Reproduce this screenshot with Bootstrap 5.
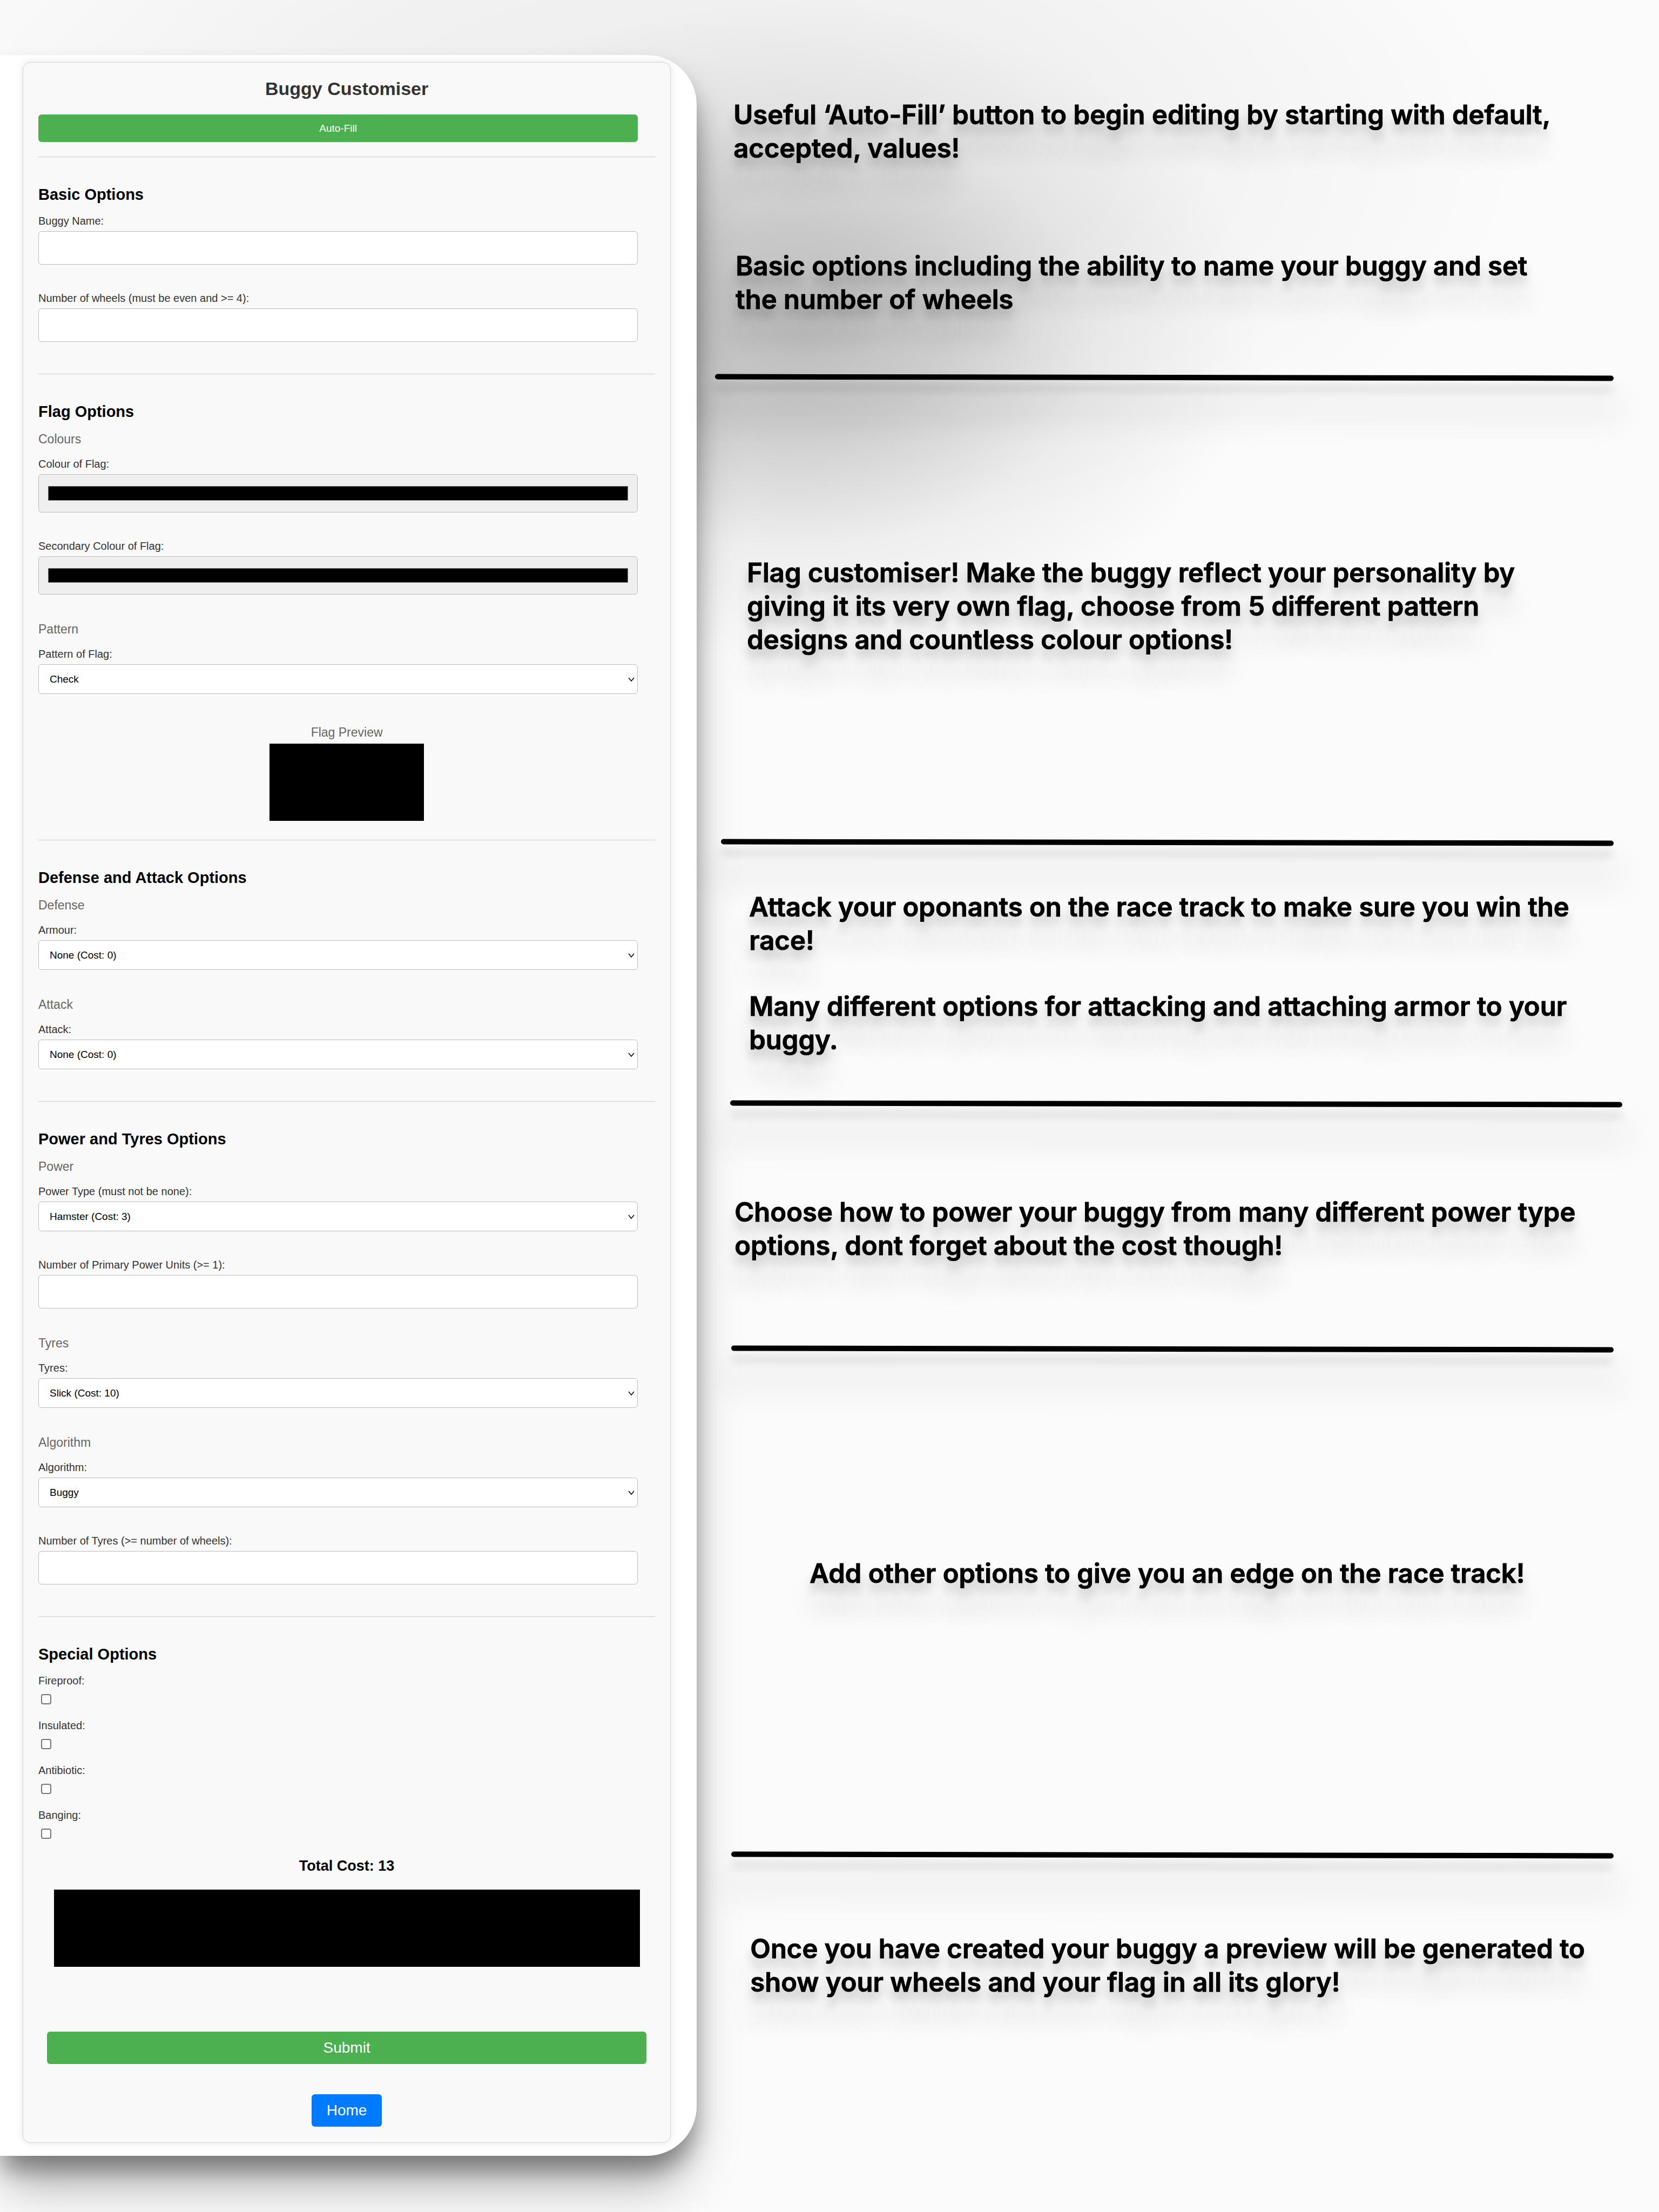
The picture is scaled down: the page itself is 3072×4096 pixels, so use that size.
<!DOCTYPE html>
<html lang="en">
<head>
<meta charset="utf-8">
<meta name="viewport" content="width=device-width, initial-scale=1">
<title>Buggy Customiser</title>
<link rel="stylesheet" href="https://cdn.jsdelivr.net/npm/bootstrap@5.3.0/dist/css/bootstrap.min.css">
<style>
body{font-family:"Liberation Sans",Arial,sans-serif;color:#333;font-size:20px;line-height:24px;background:#fcfcfc;overflow-x:hidden}
.stage{min-height:100vh;padding-top:102px;overflow:hidden;position:relative;
 background:
  radial-gradient(ellipse 28% 15% at 48% 15%,rgba(0,0,0,.22),rgba(0,0,0,.16) 30%,rgba(0,0,0,.05) 65%,transparent),
  radial-gradient(ellipse 50% 18% at 42% 7%,rgba(0,0,0,.06),rgba(0,0,0,.04) 50%,transparent),#fbfbfb}
.device{width:42%;background:#fff;border-radius:0 92px 92px 0;padding:13px 48px 24px 42px;box-shadow:0 70px 90px -10px rgba(0,0,0,.25),0 30px 44px -4px rgba(0,0,0,.38)}
.buggy-card{background:#f9f9f9;border:1px solid #d4d4d4;border-radius:14px;padding:31px 28px 29px;box-shadow:0 0 14px rgba(0,0,0,.1)}
.page-title{font-size:34px;line-height:34px;font-weight:700;text-align:center;margin:0 0 31px}
.group-title{font-size:29px;line-height:34px;font-weight:700;color:#000;margin:0 0 20px}
.sub-title{font-size:23px;line-height:28px;font-weight:400;color:#666;margin:0 0 20px}
.field-label{display:block;line-height:24px;margin-bottom:7px}
.rule{border:0;border-top:1px solid #ccc;opacity:1;margin:59px 0 52px}
.rule-first{margin-top:27px}
.rule-near{margin-top:35px}
.narrow{width:calc(100% - 32px)}
.field{margin-bottom:50px}
.form-control,.form-select{border:1px solid #bbb;border-radius:6px;color:#000;font-size:19px;background-color:#fff}
.text-field{height:62px}
.form-select{height:55px;padding:0 40px 0 20px;line-height:24px;background-size:14px 14px;background-position:right 4px center;
 background-image:url("data:image/svg+xml,%3csvg xmlns='http://www.w3.org/2000/svg' viewBox='0 0 14 14'%3e%3cpath d='M2 4l5 6 5-6' fill='none' stroke='%23000' stroke-width='1.5'/%3e%3c/svg%3e")}
.colour-field{height:71px;padding:21px 17px;background:#efefef;display:block}
.colour-field::-webkit-color-swatch-wrapper{padding:0}
.colour-field::-webkit-color-swatch{border:1px solid #777!important;border-radius:0!important}
.btn-go{background:#4caf50;color:#fff;border:0;border-radius:6px}
.btn-go:hover{background:#45a049;color:#fff}
.btn-fill{font-size:19px;line-height:24px;height:51px}
.btn-big{font-size:28px;line-height:34px;height:60px;padding:0}
.btn-home{background:#007bff;color:#fff;border:0;border-radius:6px;width:130px;padding:13px 0}
.preview{padding-top:7px}
.preview .sub-title{margin-bottom:7px}
.flag-box{width:286px;height:143px;background:#000}
.buggy-box{width:95%;height:143px;background:#000;margin-bottom:120px}
.tick.tick[type=checkbox]{display:block;width:19px;height:19px;margin:0 0 27px 5px;border:2px solid #767676;border-radius:4px;background-color:#fff;float:none}
.tick-label{margin-bottom:13px}
.total{font-size:27px;line-height:34px;font-weight:700;color:#000;margin:33px 0 27px}
.notes{flex:1;font-family:Inter,sans-serif;color:#000;padding-left:34px}
.note{font-weight:600;font-size:49px;line-height:62px;margin:0;-webkit-text-stroke:1px #000;text-shadow:0 16px 18px rgba(0,0,0,.22),0 52px 50px rgba(0,0,0,.2)}
.stroke{border:0;height:10px;border-radius:5px;background:#000;opacity:1;margin:0 84px 0 0;transform:rotate(.1deg);box-shadow:0 20px 16px rgba(0,0,0,.12),0 56px 60px 20px rgba(0,0,0,.05)}
.stroke-in{margin-left:11px}
.stroke-wide{margin:0 68px 0 28px}
.stroke-end{margin:0 84px 0 30px}
.block{display:flex;flex-direction:column}
.b1{height:592px;padding:80px 60px 0 34px;gap:156px}
.b2{height:851px;padding:326px 200px 0 59px}
.b3{height:474px;padding:84px 60px 0 63px;gap:60px}
.b4{height:444px;padding:165px 60px 0 36px}
.b5{height:927px;padding:380px 60px 0 175px}
.b6{padding:138px 60px 0 65px}
</style>
<script src="https://cdn.jsdelivr.net/npm/bootstrap@5.3.0/dist/js/bootstrap.bundle.min.js"></script>
</head>
<body>
<div class="stage d-flex align-items-start">
<main class="device">
<form class="buggy-card">
  <h1 class="page-title">Buggy Customiser</h1>
  <button type="button" class="btn btn-go btn-fill narrow d-block">Auto-Fill</button>
  <hr class="rule rule-first">

  <h2 class="group-title">Basic Options</h2>
  <div class="field narrow"><label class="field-label" for="name">Buggy Name:</label><input class="form-control text-field" id="name" type="text"></div>
  <div class="field narrow"><label class="field-label" for="wheels">Number of wheels (must be even and &gt;= 4):</label><input class="form-control text-field" id="wheels" type="text"></div>
  <hr class="rule">

  <h2 class="group-title">Flag Options</h2>
  <h3 class="sub-title">Colours</h3>
  <div class="field narrow"><label class="field-label" for="flag1">Colour of Flag:</label><input class="form-control colour-field" id="flag1" type="color" value="#000000"></div>
  <div class="field narrow"><label class="field-label" for="flag2">Secondary Colour of Flag:</label><input class="form-control colour-field" id="flag2" type="color" value="#000000"></div>
  <h3 class="sub-title">Pattern</h3>
  <div class="field narrow"><label class="field-label" for="pattern">Pattern of Flag:</label><select class="form-select" id="pattern"><option>Check</option></select></div>
  <div class="preview d-flex flex-column align-items-center">
    <h3 class="sub-title">Flag Preview</h3>
    <div class="flag-box"></div>
  </div>
  <hr class="rule rule-near">

  <h2 class="group-title">Defense and Attack Options</h2>
  <h3 class="sub-title">Defense</h3>
  <div class="field narrow"><label class="field-label" for="armour">Armour:</label><select class="form-select" id="armour"><option>None (Cost: 0)</option></select></div>
  <h3 class="sub-title">Attack</h3>
  <div class="field narrow"><label class="field-label" for="attack">Attack:</label><select class="form-select" id="attack"><option>None (Cost: 0)</option></select></div>
  <hr class="rule">

  <h2 class="group-title">Power and Tyres Options</h2>
  <h3 class="sub-title">Power</h3>
  <div class="field narrow"><label class="field-label" for="power">Power Type (must not be none):</label><select class="form-select" id="power"><option>Hamster (Cost: 3)</option></select></div>
  <div class="field narrow"><label class="field-label" for="units">Number of Primary Power Units (&gt;= 1):</label><input class="form-control text-field" id="units" type="text"></div>
  <h3 class="sub-title">Tyres</h3>
  <div class="field narrow"><label class="field-label" for="tyres">Tyres:</label><select class="form-select" id="tyres"><option>Slick (Cost: 10)</option></select></div>
  <h3 class="sub-title">Algorithm</h3>
  <div class="field narrow"><label class="field-label" for="algo">Algorithm:</label><select class="form-select" id="algo"><option>Buggy</option></select></div>
  <div class="field narrow"><label class="field-label" for="tyrecount">Number of Tyres (&gt;= number of wheels):</label><input class="form-control text-field" id="tyrecount" type="text"></div>
  <hr class="rule">

  <h2 class="group-title">Special Options</h2>
  <label class="field-label tick-label" for="fire">Fireproof:</label><input class="form-check-input tick" id="fire" type="checkbox">
  <label class="field-label tick-label" for="ins">Insulated:</label><input class="form-check-input tick" id="ins" type="checkbox">
  <label class="field-label tick-label" for="anti">Antibiotic:</label><input class="form-check-input tick" id="anti" type="checkbox">
  <label class="field-label tick-label" for="bang">Banging:</label><input class="form-check-input tick" id="bang" type="checkbox">
  <p class="total text-center">Total Cost: 13</p>
  <div class="buggy-box mx-auto"></div>
  <button type="submit" class="btn btn-go btn-big narrow d-block mx-auto">Submit</button>
  <div class="text-center pt-5 mt-2"><a class="btn btn-home btn-big" href="#">Home</a></div>
</form>
</main>

<aside class="notes">
  <div class="block b1">
    <p class="note">Useful ‘Auto-Fill’ button to begin editing by starting with default,<br>accepted, values!</p>
    <p class="note ps-1">Basic options including the ability to name your buggy and set<br>the number of wheels</p>
  </div>
  <hr class="stroke">
  <div class="block b2"><p class="note">Flag customiser! Make the buggy reflect your personality by<br>giving it its very own flag, choose from 5 different pattern<br>designs and countless colour options!</p></div>
  <hr class="stroke stroke-in">
  <div class="block b3">
    <p class="note">Attack your oponants on the race track to make sure you win the<br>race!</p>
    <p class="note">Many different options for attacking and attaching armor to your<br>buggy.</p>
  </div>
  <hr class="stroke stroke-wide">
  <div class="block b4"><p class="note">Choose how to power your buggy from many different power type<br>options, dont forget about the cost though!</p></div>
  <hr class="stroke stroke-end">
  <div class="block b5"><p class="note">Add other options to give you an edge on the race track!</p></div>
  <hr class="stroke stroke-end">
  <div class="block b6"><p class="note">Once you have created your buggy a preview will be generated to<br>show your wheels and your flag in all its glory!</p></div>
</aside>
</div>
</body>
</html>
